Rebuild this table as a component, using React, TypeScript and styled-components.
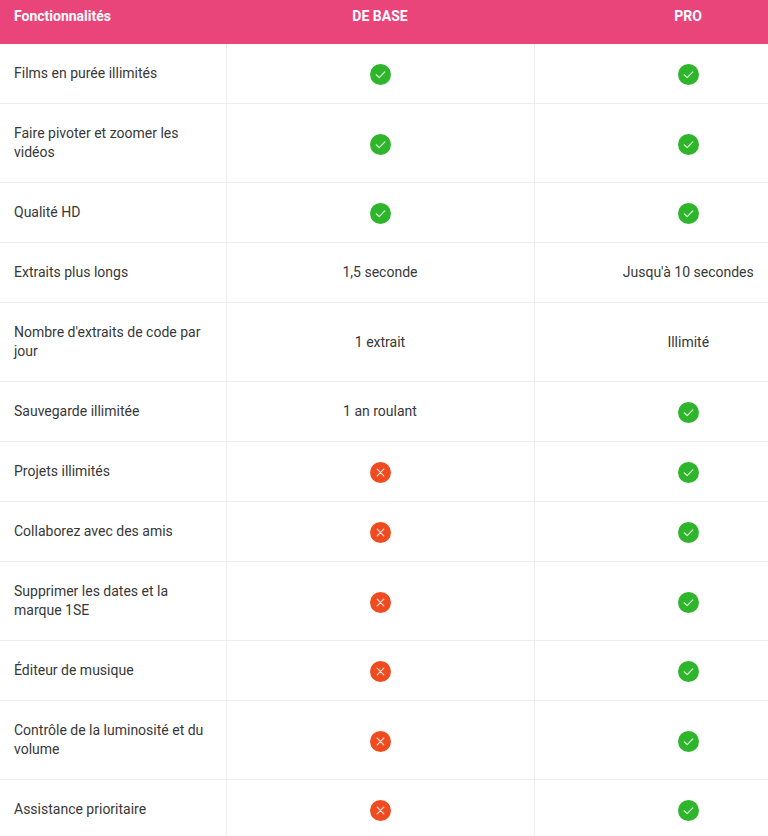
import styled, { createGlobalStyle } from "styled-components";

const GlobalStyle = createGlobalStyle`
  body {
    margin: 0;
    background: #ffffff;
    font-family: Roboto, "Liberation Sans", Arial, sans-serif;
  }
`;

type Value = "yes" | "no" | string;

const rows: { feature: string; base: Value; pro: Value }[] = [
  { feature: "Films en purée illimités", base: "yes", pro: "yes" },
  { feature: "Faire pivoter et zoomer les vidéos", base: "yes", pro: "yes" },
  { feature: "Qualité HD", base: "yes", pro: "yes" },
  { feature: "Extraits plus longs", base: "1,5 seconde", pro: "Jusqu'à 10 secondes" },
  { feature: "Nombre d'extraits de code par jour", base: "1 extrait", pro: "Illimité" },
  { feature: "Sauvegarde illimitée", base: "1 an roulant", pro: "yes" },
  { feature: "Projets illimités", base: "no", pro: "yes" },
  { feature: "Collaborez avec des amis", base: "no", pro: "yes" },
  { feature: "Supprimer les dates et la marque 1SE", base: "no", pro: "yes" },
  { feature: "Éditeur de musique", base: "no", pro: "yes" },
  { feature: "Contrôle de la luminosité et du volume", base: "no", pro: "yes" },
  { feature: "Assistance prioritaire", base: "no", pro: "yes" },
];

// the table is wider than the window, the last column is cut at the edge
const Wrapper = styled.div`
  width: 100%;
  overflow: hidden;
`;

const Table = styled.table`
  width: 842px;
  border-collapse: collapse;
  table-layout: fixed;
  font-size: 14px;
  line-height: 19px;
  color: #383838;
`;

const HeadCell = styled.th<{ $align?: "left" | "center" }>`
  background: #e9457a;
  color: #ffffff;
  font-weight: 700;
  text-align: ${(p) => p.$align ?? "center"};
  padding: 7px 14px 18px;
`;

const Cell = styled.td<{ $align?: "left" | "center" }>`
  text-align: ${(p) => p.$align ?? "center"};
  vertical-align: middle;
  padding: 20px 14px;
  border-bottom: 1px solid #eeeeee;
  & + & {
    border-left: 1px solid #eeeeee;
  }
`;

const IconWrap = styled.span`
  display: inline-block;
  height: 19px;
  vertical-align: top;

  svg {
    display: block;
  }
`;

const Check = () => (
  <IconWrap>
    <svg width="21" height="21" viewBox="0 0 21 21">
      <circle cx="10.5" cy="10.5" r="10.5" fill="#2fb52c" />
      <path d="M6.2 10.8 L9.2 13.6 L14.8 7.9" fill="none" stroke="#d8f5d6" strokeWidth="1.2" strokeLinecap="round" strokeLinejoin="round" />
    </svg>
  </IconWrap>
);

const Cross = () => (
  <IconWrap>
    <svg width="21" height="21" viewBox="0 0 21 21">
      <circle cx="10.5" cy="10.5" r="10.5" fill="#ef4b21" />
      <path d="M7.2 7.2 L13.8 13.8 M13.8 7.2 L7.2 13.8" fill="none" stroke="#fde2d8" strokeWidth="1.2" strokeLinecap="round" />
    </svg>
  </IconWrap>
);

const renderValue = (v: Value) => {
  if (v === "yes") return <Check />;
  if (v === "no") return <Cross />;
  return v;
};

export default function App() {
  return (
    <Wrapper>
      <GlobalStyle />
      <Table>
        <colgroup>
          <col style={{ width: 226 }} />
          <col style={{ width: 308 }} />
          <col style={{ width: 308 }} />
        </colgroup>
        <thead>
          <tr>
            <HeadCell $align="left">Fonctionnalités</HeadCell>
            <HeadCell>DE BASE</HeadCell>
            <HeadCell>PRO</HeadCell>
          </tr>
        </thead>
        <tbody>
          {rows.map((r) => (
            <tr key={r.feature}>
              <Cell $align="left">{r.feature}</Cell>
              <Cell>{renderValue(r.base)}</Cell>
              <Cell>{renderValue(r.pro)}</Cell>
            </tr>
          ))}
        </tbody>
      </Table>
    </Wrapper>
  );
}
